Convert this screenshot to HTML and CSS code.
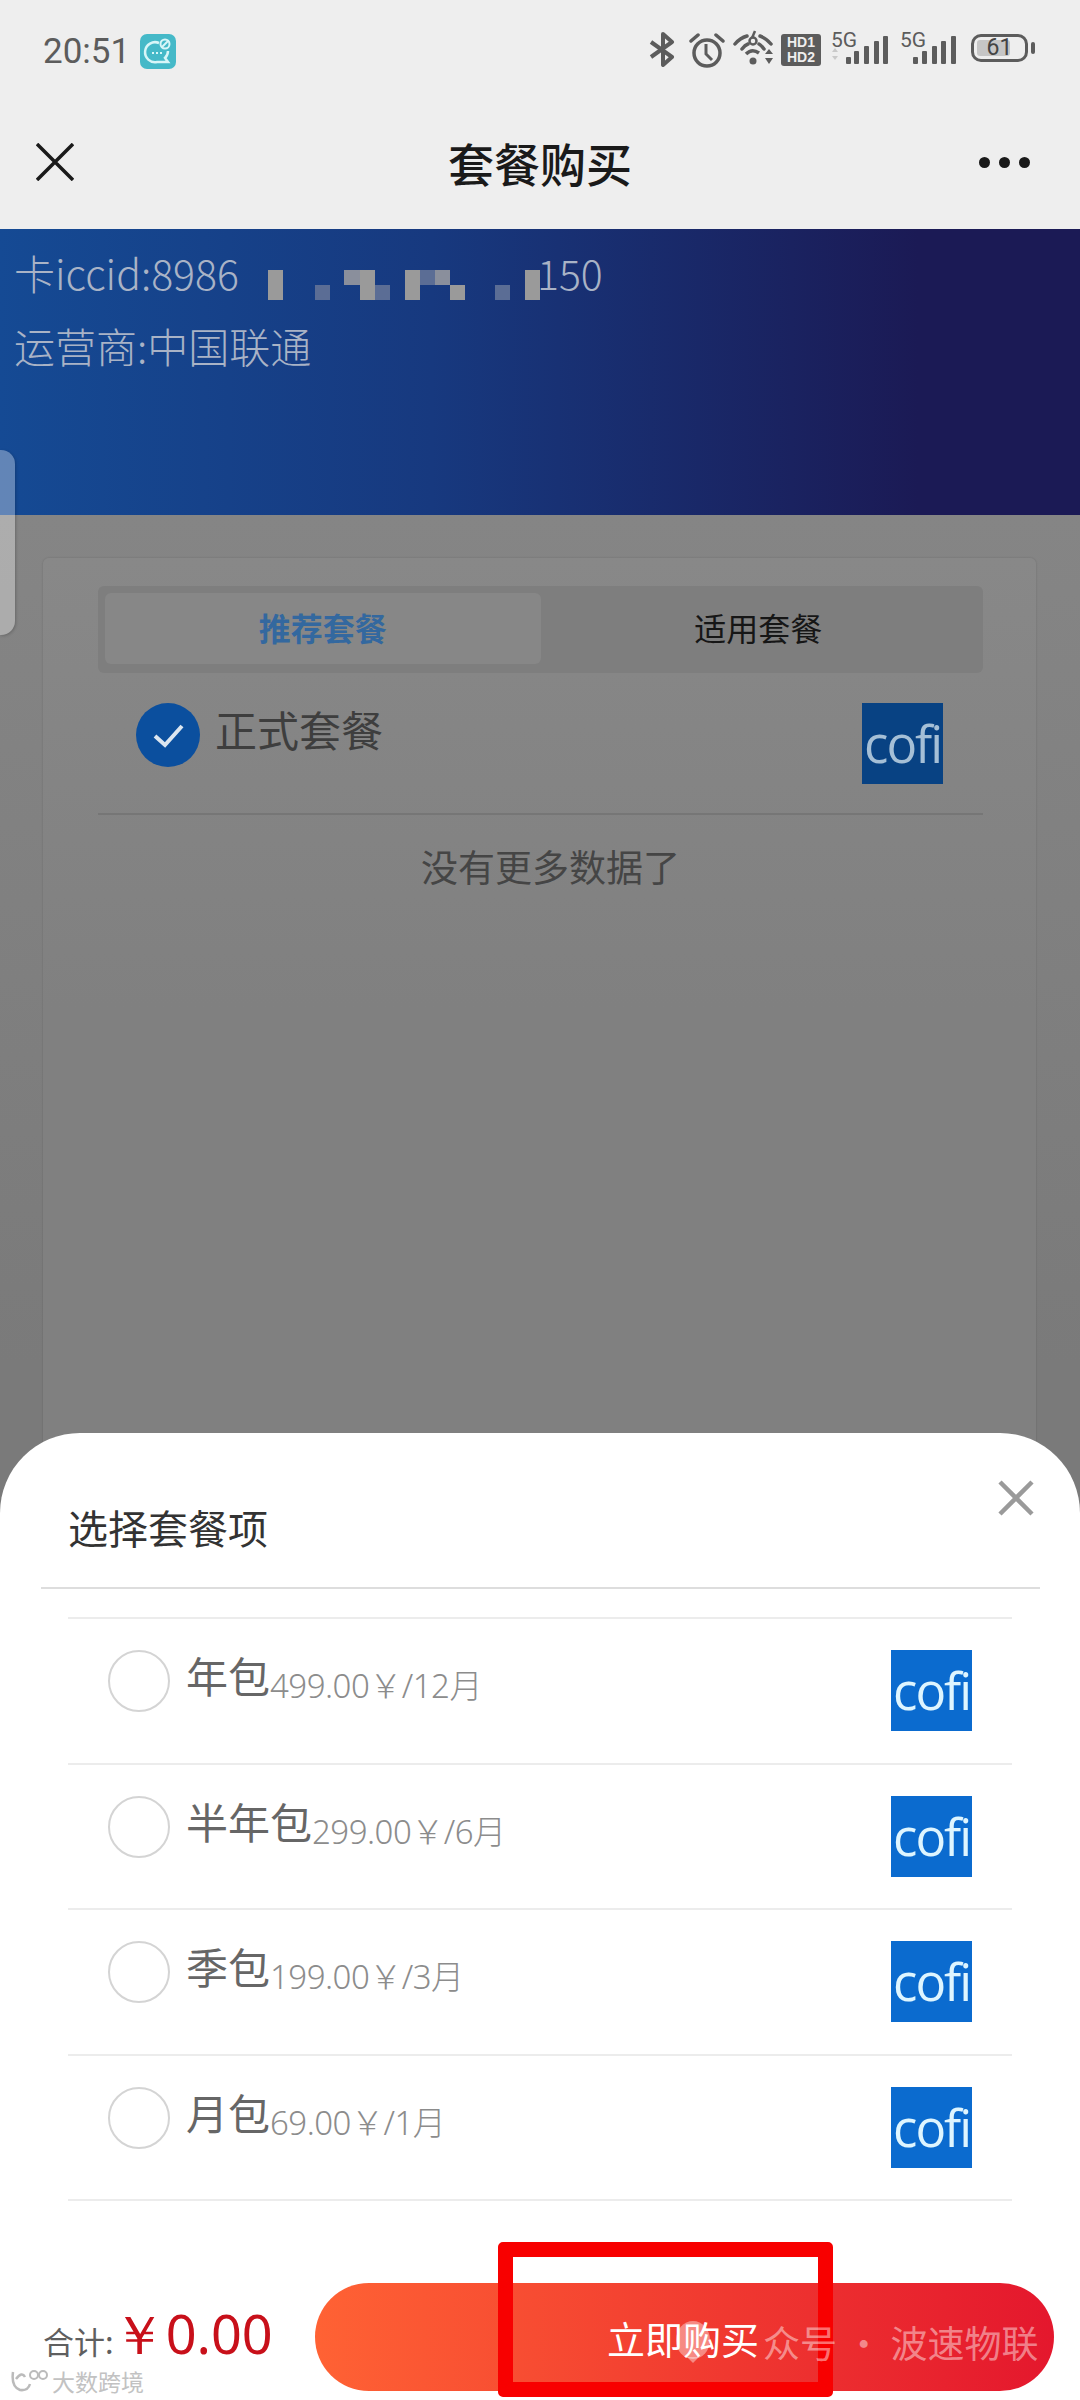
FILE: index.html
```html
<!DOCTYPE html>
<html>
<head>
  <title>套餐购买</title>
  <link rel="stylesheet" href="styles.css">
</head>
<body>
  <div class="screen">
    <div class="topbar">
      <div class="status">
        <div class="status-left">
          <span class="time">20:51</span>
          <svg class="app-icon" width="36" height="35" viewBox="0 0 36 35">
            <rect width="36" height="35" rx="7" fill="#45b9c8"/>
            <path d="M19 9A10 10 0 1 0 17 28H28l-3-4A10 10 0 0 0 28 17" fill="none" stroke="#d8f6f8" stroke-width="2.500"/>
            <circle cx="25" cy="10" r="4.500" fill="none" stroke="#d8f6f8" stroke-width="2"/>
            <path d="M22 13l6-6" stroke="#d8f6f8" stroke-width="2"/>
            <path d="M12 19h2M16 19h2M20 19h2" stroke="#d8f6f8" stroke-width="2"/>
          </svg>
        </div>
        <div class="status-right">
          <svg class="st-bt" width="26" height="35" viewBox="0 0 26 35">
            <path d="M2 10l21 15-9 8V2l9 8L2 25" fill="none" stroke="#5c5c5c" stroke-width="4" stroke-linejoin="round"/>
          </svg>
          <svg class="st-alarm" width="36" height="36" viewBox="0 0 36 36">
            <circle cx="18" cy="21" r="13" fill="none" stroke="#5c5c5c" stroke-width="3.500"/>
            <path d="M17 12v10l6 6" fill="none" stroke="#5c5c5c" stroke-width="3"/>
            <path d="M2 9l7-6M34 9l-7-6" stroke="#5c5c5c" stroke-width="3.500" stroke-linecap="round"/>
          </svg>
          <svg class="st-wifi" width="42" height="35" viewBox="0 0 42 35">
            <path d="M2 14Q7 8 14 6M38 14Q33 8 27 6M9 19Q12 15 15 14M31 19Q28 15 26 14" fill="none" stroke="#5c5c5c" stroke-width="3.500" stroke-linecap="round"/>
            <circle cx="20" cy="11" r="3.500" fill="none" stroke="#5c5c5c" stroke-width="2.500"/>
            <path d="M22 1l-3 7" stroke="#5c5c5c" stroke-width="2.500"/>
            <path d="M13 24Q19 18 26 23" fill="none" stroke="#5c5c5c" stroke-width="3.500"/>
            <circle cx="20" cy="31" r="3.500" fill="#5c5c5c"/>
            <path d="M32 24l4-5 4 5zM32 28l4 6 4-6z" fill="#5c5c5c"/>
          </svg>
          <div class="hd-box"><span>HD1</span><span>HD2</span></div>
          <div class="signal">
            <span class="five-g">5G</span>
            <svg width="58" height="31" viewBox="0 0 58 31">
              <path d="M1 19l3-4 3 4zM1 23l3 4 3-4z" fill="#c9c9c9"/>
              <rect x="15" y="24" width="5" height="7" rx="1" fill="#5c5c5c"/>
              <rect x="23" y="18" width="5" height="13" rx="1" fill="#5c5c5c"/>
              <rect x="33" y="13" width="5" height="18" rx="1" fill="#5c5c5c"/>
              <rect x="43" y="8" width="5" height="23" rx="1" fill="#5c5c5c"/>
              <rect x="52" y="3" width="5" height="28" rx="1" fill="#5c5c5c"/>
            </svg>
          </div>
          <div class="signal">
            <span class="five-g">5G</span>
            <svg width="58" height="31" viewBox="0 0 58 31">
              <rect x="13" y="24" width="5" height="7" rx="1" fill="#5c5c5c"/>
              <rect x="22" y="18" width="5" height="13" rx="1" fill="#5c5c5c"/>
              <rect x="32" y="13" width="5" height="18" rx="1" fill="#5c5c5c"/>
              <rect x="41" y="8" width="5" height="23" rx="1" fill="#5c5c5c"/>
              <rect x="51" y="3" width="5" height="28" rx="1" fill="#5c5c5c"/>
            </svg>
          </div>
          <div class="battery">
            <div class="battery-body"><span class="battery-fill"></span><span class="battery-num">61</span></div>
            <span class="battery-nub"></span>
          </div>
        </div>
      </div>
      <div class="nav">
        <svg class="nav-close" width="38" height="38" viewBox="0 0 38 38">
          <path d="M1 1l36 36M37 1L1 37" stroke="#1a1a1a" stroke-width="3.500"/>
        </svg>
        <h1 class="nav-title">套餐购买</h1>
        <div class="dots"><i></i><i></i><i></i></div>
      </div>
    </div>

    <div class="card-head">
      <div class="head-line">
        <span>卡iccid:8986</span>
        <span class="iccid-end">150</span>
        <!-- pixelated part of the card number -->
        <svg class="iccid-mask" width="272" height="30" viewBox="0 0 272 30">
          <rect x="0" y="0" width="15" height="30" fill="#9a9a9a"/>
          <rect x="47" y="15" width="15" height="15" fill="#5b6d95"/>
          <rect x="76" y="0" width="16" height="15" fill="#8a8f9c"/>
          <rect x="92" y="0" width="15" height="30" fill="#9a9a9a"/>
          <rect x="107" y="15" width="15" height="15" fill="#5b6d95"/>
          <rect x="137" y="0" width="15" height="30" fill="#9a9a9a"/>
          <rect x="152" y="0" width="15" height="15" fill="#5b6d95"/>
          <rect x="167" y="0" width="15" height="15" fill="#8a8f9c"/>
          <rect x="182" y="15" width="15" height="15" fill="#9a9a9a"/>
          <rect x="227" y="15" width="15" height="15" fill="#5b6d95"/>
          <rect x="257" y="0" width="15" height="30" fill="#9a9a9a"/>
        </svg>
      </div>
      <div class="head-line">运营商:中国联通</div>
    </div>

    <div class="page">
      <div class="card">
        <div class="tabs">
          <div class="tab tab-active">推荐套餐</div>
          <div class="tab">适用套餐</div>
        </div>
        <div class="main-row">
          <svg class="check" width="64" height="64" viewBox="0 0 64 64">
            <circle cx="32" cy="32" r="32" fill="#0b4f9e"/>
            <path d="M19 33l10 9 17-19" fill="none" stroke="#dce6f0" stroke-width="4"/>
          </svg>
          <span class="main-name">正式套餐</span>
          <div class="logo logo-dim">cofi</div>
        </div>
        <div class="no-more">没有更多数据了</div>
      </div>
    </div>

    <div class="side-tab"></div>

    <div class="sheet">
      <div class="sheet-head">
        <span class="sheet-title">选择套餐项</span>
        <svg class="sheet-close" width="36" height="36" viewBox="0 0 36 36">
          <path d="M2 2l32 32M34 2L2 34" stroke="#9a9a9a" stroke-width="4.500"/>
        </svg>
      </div>
      <div class="plans">
        <div class="plan">
          <span class="radio"></span>
          <span class="plan-name">年包</span><span class="plan-price">499.00￥/12月</span>
          <div class="logo">cofi</div>
        </div>
        <div class="plan">
          <span class="radio"></span>
          <span class="plan-name">半年包</span><span class="plan-price">299.00￥/6月</span>
          <div class="logo">cofi</div>
        </div>
        <div class="plan">
          <span class="radio"></span>
          <span class="plan-name">季包</span><span class="plan-price">199.00￥/3月</span>
          <div class="logo">cofi</div>
        </div>
        <div class="plan">
          <span class="radio"></span>
          <span class="plan-name">月包</span><span class="plan-price">69.00￥/1月</span>
          <div class="logo">cofi</div>
        </div>
      </div>
      <div class="footer">
        <div class="sum">
          <span class="sum-label">合计:</span>
          <span class="sum-value">￥0.00</span>
        </div>
        <div class="buy">立即购买</div>
      </div>
    </div>

    <!-- marks added on top of the screenshot -->
    <div class="red-box"></div>
    <div class="mark-public">
      <svg width="36" height="42" viewBox="0 0 36 42">
        <ellipse cx="18" cy="19" rx="17" ry="19" fill="#fff" opacity="0.4"/>
        <path d="M12 36l12 0-6 6z" fill="#fff" opacity="0.4"/>
      </svg>
      <span>众号 · 波速物联</span>
    </div>
    <div class="mark-site">
      <svg width="40" height="24" viewBox="0 0 40 24">
        <path d="M3 3Q1 18 10 21Q18 22 20 15M6 10Q12 2 15 8" fill="none" stroke="#bbb" stroke-width="2.500"/>
        <circle cx="24" cy="6" r="4" fill="none" stroke="#bbb" stroke-width="2"/>
        <circle cx="33" cy="6" r="4" fill="none" stroke="#bbb" stroke-width="2"/>
      </svg>
      <span>大数跨境</span>
    </div>
  </div>
</body>
</html>
```

FILE: styles.css
```css
* {
  box-sizing: border-box;
}

body {
  margin: 0;
  font-family: "Noto Sans", "Noto Sans CJK SC", sans-serif;
}

.screen {
  position: relative;
  width: 1080px;
  height: 2400px;
  overflow: hidden;
  display: flex;
  flex-direction: column;
  background-color: #808080;
}

.topbar {
  height: 229px;
  flex: none;
  padding: 33px 0 0;
  background-color: #eeeeee;
}

.status {
  display: flex;
  justify-content: space-between;
  align-items: center;
  height: 37px;
  padding: 0 45px 0 43px;
}

.status-left {
  display: flex;
  align-items: center;
  gap: 10px;
}

.time {
  font-family: "Roboto", sans-serif;
  font-size: 35px;
  color: #5c5c5c;
}

.status-right {
  display: flex;
  align-items: flex-start;
  gap: 8px;
  height: 37px;
}

.st-bt {
  margin-right: 6px;
  margin-top: -1px;
}

.st-alarm {
  margin-top: -1px;
}

.st-wifi {
  margin-top: -3px;
  margin-right: -2px;
}

.hd-box {
  width: 40px;
  height: 32px;
  margin-top: 1px;
  margin-right: 2px;
  padding-top: 1px;
  display: flex;
  flex-direction: column;
  align-items: center;
  background-color: #5c5c5c;
  border-radius: 3px;
  color: #eee;
  font-family: "Liberation Sans", sans-serif;
  font-size: 14px;
  font-weight: bold;
  line-height: 15px;
}

.signal {
  position: relative;
  width: 58px;
  height: 31px;
  margin-right: 3px;
}

.signal svg {
  display: block;
}

.five-g {
  position: absolute;
  left: 0;
  top: -4px;
  font-family: "Roboto", sans-serif;
  font-size: 21px;
  line-height: 22px;
  color: #5c5c5c;
}

.battery {
  display: flex;
  align-items: center;
  gap: 3px;
  margin-top: 1px;
  margin-left: 2px;
}

.battery-body {
  position: relative;
  width: 57px;
  height: 28px;
  border: 3px solid #5c5c5c;
  border-radius: 10px;
  padding: 3px;
}

.battery-fill {
  display: block;
  width: 73%;
  height: 100%;
  background-color: #c6c6c6;
  border-radius: 3px;
}

.battery-num {
  position: absolute;
  left: 0;
  right: 0;
  top: 0;
  text-align: center;
  font-family: "Roboto", sans-serif;
  font-size: 23px;
  line-height: 22px;
  color: #444;
}

.battery-nub {
  width: 4px;
  height: 12px;
  background-color: #5c5c5c;
  border-radius: 2px;
}

.nav {
  display: grid;
  grid-template-columns: 1fr auto 1fr;
  align-items: center;
  height: 44px;
  margin-top: 70px;
  padding: 0 50px;
}

.nav-close {
  margin-left: -14px;
}

.nav-title {
  margin: 0;
  font-size: 46px;
  font-weight: 500;
  line-height: 44px;
  color: #1a1a1a;
  font-family: "Noto Sans CJK SC", sans-serif;
}

.dots {
  display: flex;
  justify-content: flex-end;
  gap: 9px;
}

.dots i {
  width: 11px;
  height: 11px;
  background-color: #1a1a1a;
  border-radius: 50%;
}

.card-head {
  height: 286px;
  flex: none;
  padding: 7px 14px 0;
  background: linear-gradient(90deg, #154a94 0%, #17397f 40%, #1b1a55 85%);
  color: #a9b3c6;
  font-size: 41px;
}

.head-line {
  position: relative;
  height: 73px;
  line-height: 73px;
  font-weight: 300;
  font-family: "Noto Sans CJK SC", sans-serif;
}

.iccid-end {
  position: absolute;
  left: 523px;
  top: 0;
}

.iccid-mask {
  position: absolute;
  left: 254px;
  top: 34px;
}

.page {
  flex: 1;
  padding: 43px 44px 0 43px;
  background: linear-gradient(180deg, #858585 0%, #7a7a7a 45%);
}

.card {
  height: 1000px;
  padding: 28px 53px 0 55px;
  background: linear-gradient(180deg, #888888 0%, #808080 45%);
  border-radius: 6px;
  box-shadow: 0 0 2px rgba(0, 0, 0, 0.2);
}

.tabs {
  display: flex;
  height: 87px;
  padding: 7px 7px 9px;
  background-color: #7e7e7e;
  border-radius: 6px;
}

.tab {
  flex: 1;
  display: flex;
  align-items: center;
  justify-content: center;
  padding-bottom: 4px;
  font-size: 32px;
  color: #161616;
  font-family: "Noto Sans CJK SC", sans-serif;
}

.tab-active {
  background-color: #878787;
  border-radius: 6px;
  color: #33689f;
  font-weight: 700;
}

.main-row {
  display: flex;
  align-items: flex-start;
  height: 142px;
  padding: 30px 40px 0 38px;
  border-bottom: 2px solid #767676;
}

.main-name {
  margin-left: 15px;
  font-size: 42px;
  line-height: 52px;
  color: #3e3e3e;
  font-family: "Noto Sans CJK SC", sans-serif;
}

.logo {
  width: 81px;
  height: 81px;
  margin-left: auto;
  overflow: hidden;
  padding: 10px 0 0 2px;
  background-color: #0b6bcf;
  color: #def5ff;
  font-family: "Open Sans", sans-serif;
  font-size: 51px;
  font-weight: 500;
  line-height: 60px;
  letter-spacing: -2px;
  white-space: nowrap;
}

.logo-dim {
  background-color: #084283;
  color: #a5bfd6;
}

.no-more {
  margin-top: 29px;
  padding-left: 20px;
  text-align: center;
  font-size: 37px;
  line-height: 44px;
  color: #454545;
  font-family: "Noto Sans CJK SC", sans-serif;
}

.side-tab {
  position: absolute;
  left: 0;
  top: 450px;
  width: 15px;
  height: 185px;
  background-color: rgba(255, 255, 255, 0.33);
  border-radius: 0 14px 14px 0;
  box-shadow: 1px 1px 3px rgba(0, 0, 0, 0.2);
}

.sheet {
  position: absolute;
  left: 0;
  right: 0;
  bottom: 0;
  height: 967px;
  background-color: #fff;
  border-radius: 80px 80px 0 0;
}

.sheet-head {
  display: flex;
  justify-content: space-between;
  height: 156px;
  margin: 0 40px 0 41px;
  padding: 47px 6px 0 27px;
  border-bottom: 2px solid #dddddd;
}

.sheet-title {
  margin-top: 22px;
  font-size: 40px;
  line-height: 50px;
  color: #333;
  font-family: "Noto Sans CJK SC", sans-serif;
}

.sheet-close {
  flex: none;
}

.plans {
  margin: 28px 68px 0 68px;
  border-bottom: 2px solid #ececec;
}

.plan {
  display: flex;
  align-items: flex-start;
  height: 145.500px;
  padding: 31px 40px 0 40px;
  border-top: 2px solid #ececec;
}

.radio {
  width: 62px;
  height: 62px;
  flex: none;
  margin-right: 16px;
  border: 2px solid #d4d4d4;
  border-radius: 50%;
}

.plan-name {
  font-size: 42px;
  line-height: 50px;
  color: #666;
  font-family: "Noto Sans CJK SC", sans-serif;
}

.plan-price {
  margin-top: 14px;
  font-size: 33px;
  line-height: 44px;
  font-weight: 300;
  letter-spacing: -0.500px;
  color: #8c8c8c;
  font-family: "Noto Sans", "Noto Sans CJK SC", sans-serif;
}

.footer {
  display: flex;
  justify-content: space-between;
  align-items: center;
  height: 108px;
  margin-top: 82px;
  padding: 0 26px 0 43px;
}

.sum {
  display: flex;
  align-items: baseline;
  margin-top: -5px;
}

.sum-label {
  margin-right: -2px;
  font-size: 31px;
  color: #5f5f5f;
  font-family: "Noto Sans CJK SC", sans-serif;
}

.sum-value {
  font-family: "Noto Sans", sans-serif;
  font-size: 54px;
  color: #c8101a;
}

.buy {
  width: 739px;
  height: 108px;
  padding-left: 292px;
  display: flex;
  align-items: center;
  background: linear-gradient(90deg, #ff6234 0%, #e4172d 100%);
  border-radius: 54px;
  color: #fff;
  font-size: 38px;
  font-family: "Noto Sans CJK SC", sans-serif;
}

.red-box {
  position: absolute;
  left: 498px;
  top: 2242px;
  width: 335px;
  height: 155px;
  border: 15px solid #f80000;
  border-radius: 5px;
}

.mark-public {
  position: absolute;
  left: 675px;
  top: 2315px;
  display: flex;
  align-items: center;
  gap: 52px;
  color: rgba(255, 255, 255, 0.45);
  font-size: 37px;
  font-family: "Noto Sans CJK SC", sans-serif;
  white-space: nowrap;
}

.mark-site {
  position: absolute;
  left: 10px;
  top: 2368px;
  display: flex;
  align-items: center;
  gap: 2px;
  color: #c2c2c2;
  font-size: 23px;
  line-height: 26px;
  font-family: "Noto Sans CJK SC", sans-serif;
}
```
